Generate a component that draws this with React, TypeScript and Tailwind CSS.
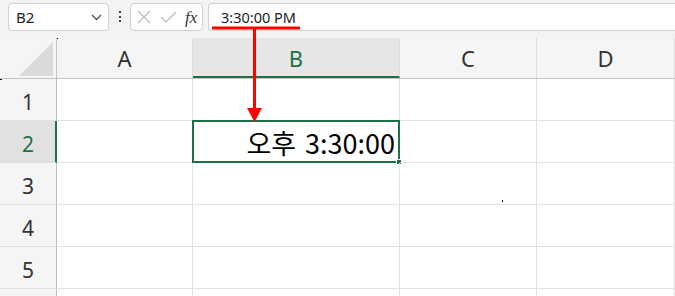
import React from "react";

const cols = [
  { name: "A", w: "w-[136px]" },
  { name: "B", w: "w-[207px]" },
  { name: "C", w: "w-[137px]" },
  { name: "D", w: "flex-1" },
];

const rows = [1, 2, 3, 4, 5, 6];

const font = "font-['Segoe_UI','Noto_Sans','Open_Sans',sans-serif]";

function NameBox() {
  return (
    <div className="ml-[8px] flex h-[28px] w-[101px] items-center justify-between rounded-[4px] border border-[#d1d1d1] bg-white pl-[7px] pr-[6px]">
      <span className="text-[15px] leading-none text-[#222]">B2</span>
      <svg width="11" height="7" viewBox="0 0 11 7" fill="none">
        <path d="M1 1l4.5 4.5L10 1" stroke="#555" strokeWidth="1.3" />
      </svg>
    </div>
  );
}

function FxBox() {
  return (
    <div className="flex h-[28px] w-[73px] items-center rounded-[4px] border border-[#d1d1d1] bg-white pl-[6px]">
      <svg width="14" height="14" viewBox="0 0 14 14" fill="none">
        <path d="M1 1l12 12M13 1L1 13" stroke="#bdbdbd" strokeWidth="1.3" />
      </svg>
      <svg className="ml-[9px]" width="17" height="13" viewBox="0 0 17 13" fill="none">
        <path d="M1 6l5 5L16 1" stroke="#bdbdbd" strokeWidth="1.3" />
      </svg>
      <span className="ml-[8px] font-['Liberation_Serif',serif] text-[17px] italic leading-none text-[#333]">
        fx
      </span>
    </div>
  );
}

export default function App() {
  return (
    <div className={`relative h-[296px] w-[675px] overflow-hidden bg-white ${font}`}>
      {/* formula bar */}
      <div className="flex h-[38px] items-start bg-[#f3f3f3] pt-[3px]">
        <NameBox />
        <div className="flex w-[21px] flex-col items-center gap-[2.5px] pt-[8px]">
          <span className="h-[2px] w-[2px] bg-[#444]" />
          <span className="h-[2px] w-[2px] bg-[#444]" />
          <span className="h-[2px] w-[2px] bg-[#444]" />
        </div>
        <FxBox />
        <div className="ml-[5px] flex h-[28px] flex-1 items-center rounded-l-[4px] border border-r-0 border-[#d1d1d1] bg-white pl-[12px]">
          <span className="text-[14.5px] leading-none text-[#222]">3:30:00 PM</span>
        </div>
      </div>

      {/* column headers */}
      <div className="flex h-[41px] border-b border-[#c4c4c4] bg-[#f5f5f5]">
        <div className="relative w-[57px] shrink-0 border-r border-[#c4c4c4]">
          <svg className="absolute left-[19px] top-[4px]" width="34" height="34" viewBox="0 0 34 34">
            <path d="M34 0V34H0Z" fill="#dadada" />
          </svg>
        </div>
        {cols.map((c) => (
          <div
            key={c.name}
            className={`${c.w} flex shrink-0 items-center justify-center border-r border-[#dcdcdc] text-[22px] ${
              c.name === "B"
                ? "border-b-2 border-b-[#1e7145] bg-[#e6e6e6] pt-[2px] text-[#1e7145]"
                : "text-[#333]"
            }`}
          >
            {c.name}
          </div>
        ))}
      </div>

      {/* rows */}
      {rows.map((r) => (
        <div key={r} className="flex h-[42px]">
          <div
            className={`flex w-[57px] shrink-0 items-center justify-center border-b border-r pt-[7px] text-[21px] ${
              r === 2
                ? "border-b-[#dcdcdc] border-r-2 border-r-[#1e7145] bg-[#e1e1e1] pl-[1px] text-[#1e7145]"
                : "border-b-[#e1e1e1] border-r-[#bdbdbd] bg-[#f5f5f5] text-[#333]"
            }`}
          >
            {r < 6 ? r : ""}
          </div>
          {cols.map((c) => (
            <div
              key={c.name}
              className={`${c.w} relative shrink-0 border-b border-r border-[#e1e1e1]`}
            >
              {r === 2 && c.name === "B" && (
                <div className="absolute -left-[1px] -top-[1px] bottom-[-1px] right-[-1px] flex items-center justify-end border-2 border-[#1e7145] pr-[3px] pt-[2px]">
                  <span className="font-['Noto_Sans_CJK_KR','Noto_Sans',sans-serif] text-[27px] leading-none text-black">
                    <span>오후</span>
                    <span className="ml-[9px]">3:30:00</span>
                  </span>
                  <span className="absolute -bottom-[4px] -right-[4px] h-[6px] w-[6px] border border-white bg-[#1e7145]" />
                </div>
              )}
            </div>
          ))}
        </div>
      ))}

      {/* stray pixels */}
      <span className="absolute left-[57px] top-[38px] h-[1px] w-[1px] bg-black" />
      <span className="absolute left-0 top-[79px] h-[1px] w-[2px] bg-black" />
      <span className="absolute left-[502px] top-[200px] h-[2px] w-[1px] bg-black" />

      {/* red annotation arrow */}
      <svg className="pointer-events-none absolute left-0 top-0" width="675" height="296">
        <path d="M212 28H300" stroke="#ff0000" strokeWidth="3" />
        <path d="M254.5 28V110" stroke="#ff0000" strokeWidth="3" />
        <path d="M247 108H262L254.5 122Z" fill="#ff0000" />
      </svg>
    </div>
  );
}
